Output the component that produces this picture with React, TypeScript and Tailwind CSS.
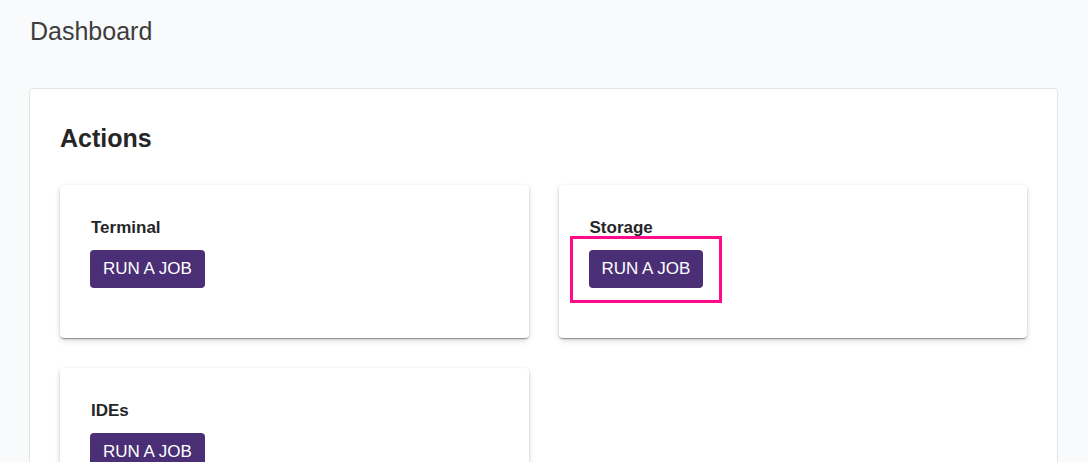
import React from "react";

const font = { fontFamily: '"Liberation Sans", Arial, sans-serif' };

function ActionCard({ title, highlight }: { title: string; highlight?: boolean }) {
  return (
    <div className="bg-white rounded-[4px] px-[30px] pt-[33px] pb-[50px] shadow-[0px_2px_1px_-1px_rgba(0,0,0,0.2),0px_1px_1px_0px_rgba(0,0,0,0.14),0px_1px_3px_0px_rgba(0,0,0,0.12),0px_3px_6px_0px_rgba(0,0,0,0.12)]">
      <div className="text-[17px] leading-[20px] font-bold text-[#262626] pl-px">{title}</div>
      <div className="relative mt-[12px] w-fit">
        <button className="h-[38px] px-[13px] rounded-[4px] bg-[#4a2f76] text-white text-[17px] leading-[38px] uppercase">
          Run a job
        </button>
        {highlight && (
          <div className="absolute left-[-19px] top-[-14px] w-[152px] h-[67px] border-[3px] border-[#ff0a8a] pointer-events-none" />
        )}
      </div>
    </div>
  );
}

export default function App() {
  return (
    <div className="min-h-[462px] bg-[#f9fafc] pt-[17px] pl-[29px] pr-[30px]" style={font}>
      <h1 className="text-[25px] leading-[28px] text-[#3d3d3d] pl-px">Dashboard</h1>
      <div className="mt-[43px] bg-white border border-[#e3e3e3] rounded-[4px] px-[30px] pt-[34px] pb-[30px]">
        <h2 className="text-[25px] leading-[30px] font-bold text-[#262626]">Actions</h2>
        <div className="mt-[32px] grid grid-cols-2 gap-x-[30px] gap-y-[30px]">
          <ActionCard title="Terminal" />
          <ActionCard title="Storage" highlight />
          <ActionCard title="IDEs" />
        </div>
      </div>
    </div>
  );
}
